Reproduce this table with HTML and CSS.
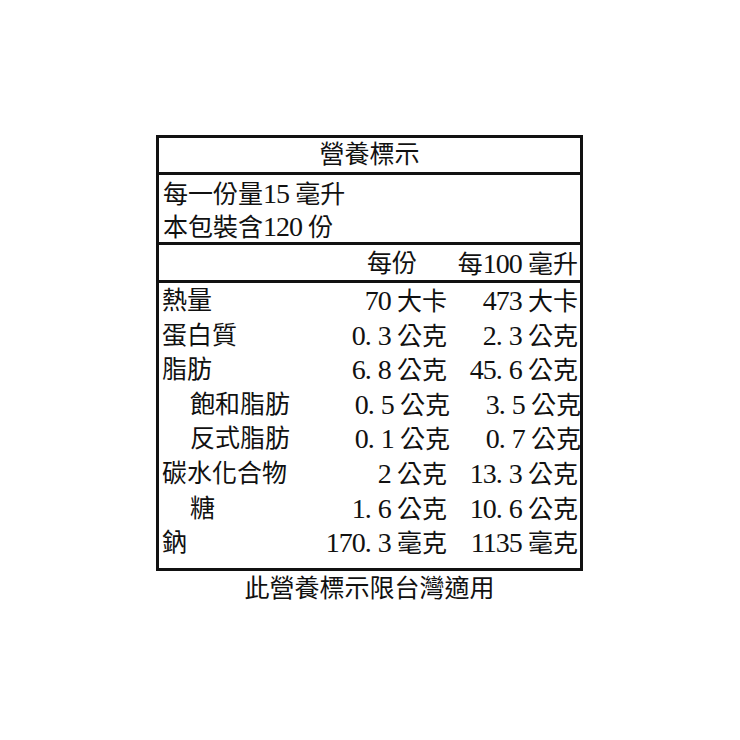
FILE: index.html
```html
<!DOCTYPE html>
<html lang="zh-Hant">
<head>
<meta charset="utf-8">
<title>營養標示</title>
<link rel="stylesheet" href="styles.css">
</head>
<body>
<div class="page">
  <div class="label">
    <div class="title">營養標示</div>
    <div class="serving">
      <div class="line">每一份量<span class="n">15</span> 毫升</div>
      <div class="line">本包裝含<span class="n">120</span> 份</div>
    </div>
    <div class="header">
      <div></div>
      <div class="hcol1">每份</div>
      <div class="hcol2">每<span class="n">100</span> 毫升</div>
    </div>
    <div class="rows">
      <div class="row"><div class="name">熱量</div><div class="val"><span class="n">70</span> 大卡</div><div class="val"><span class="n">473</span> 大卡</div></div>
      <div class="row"><div class="name">蛋白質</div><div class="val"><span class="n">0<span class="dot">.</span>3</span> 公克</div><div class="val"><span class="n">2<span class="dot">.</span>3</span> 公克</div></div>
      <div class="row"><div class="name">脂肪</div><div class="val"><span class="n">6<span class="dot">.</span>8</span> 公克</div><div class="val"><span class="n">45<span class="dot">.</span>6</span> 公克</div></div>
      <div class="row"><div class="name sub">飽和脂肪</div><div class="val"><span class="n">0<span class="dot">.</span>5</span> 公克</div><div class="val"><span class="n">3<span class="dot">.</span>5</span> 公克</div></div>
      <div class="row"><div class="name sub">反式脂肪</div><div class="val"><span class="n">0<span class="dot">.</span>1</span> 公克</div><div class="val"><span class="n">0<span class="dot">.</span>7</span> 公克</div></div>
      <div class="row"><div class="name">碳水化合物</div><div class="val"><span class="n">2</span> 公克</div><div class="val"><span class="n">13<span class="dot">.</span>3</span> 公克</div></div>
      <div class="row"><div class="name sub">糖</div><div class="val"><span class="n">1<span class="dot">.</span>6</span> 公克</div><div class="val"><span class="n">10<span class="dot">.</span>6</span> 公克</div></div>
      <div class="row"><div class="name">鈉</div><div class="val"><span class="n">170<span class="dot">.</span>3</span> 毫克</div><div class="val"><span class="n">1135</span> 毫克</div></div>
    </div>
  </div>
  <div class="footer">此營養標示限台灣適用</div>
</div>
</body>
</html>
```
FILE: styles.css
```css
html, body {
  margin: 0;
  padding: 0;
  background: #ffffff;
}

body {
  font-family: "Liberation Serif", "Noto Sans CJK TC", serif;
  font-size: 25px;
  color: #111111;
}

.page {
  width: 427px;
  margin-left: 156px;
  padding-top: 135px;
}

.label {
  border: 3px solid #111111;
}

.title {
  height: 34px;
  line-height: 34px;
  text-align: center;
  border-bottom: 3px solid #111111;
}

.serving {
  height: 67px;
  padding-left: 4px;
  border-bottom: 3px solid #111111;
}

.serving .line {
  height: 33px;
  line-height: 37px;
}

.header {
  height: 35px;
  line-height: 38px;
  display: grid;
  grid-template-columns: 1fr 160px 131px;
  padding: 0 2px 0 4px;
  border-bottom: 3px solid #111111;
}

.hcol1 {
  text-align: right;
  padding-right: 30px;
}

.hcol2 {
  text-align: right;
}

.rows {
  padding: 0 2px 8px 3px;
}

.row {
  display: grid;
  grid-template-columns: 1fr 160px 131px;
  height: 34.6px;
  line-height: 36px;
}

.name {
  white-space: nowrap;
}

.name.sub {
  padding-left: 28px;
}

.val {
  text-align: right;
  white-space: nowrap;
}

.n {
  font-size: 28px;
  letter-spacing: -1px;
}

.dot {
  display: inline-block;
  width: 13px;
  text-align: left;
  letter-spacing: 0;
}

.footer {
  text-align: center;
  line-height: 36px;
}
```
